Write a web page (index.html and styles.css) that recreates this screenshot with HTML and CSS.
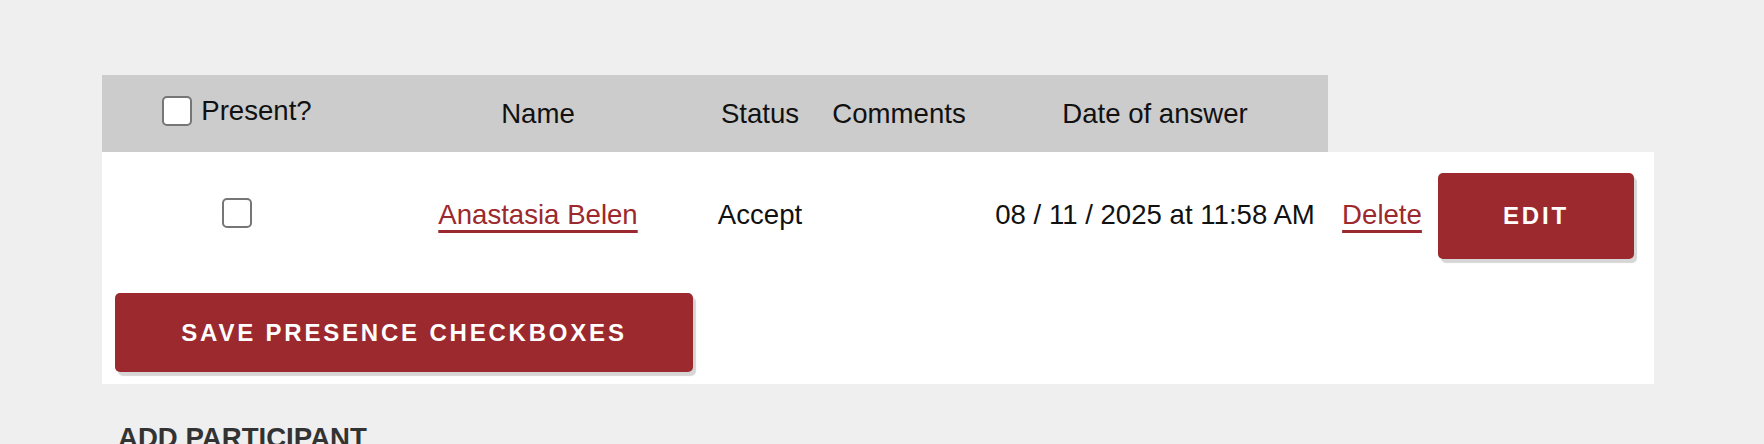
FILE: index.html
```html
<!DOCTYPE html>
<html lang="en">

<head>
    <meta charset="UTF-8" />
    <title>Participants</title>
    <link rel="stylesheet" href="styles.css">
</head>

<body>
    <div class="page">
        <form class="participants">
            <table class="participants-table">
                <colgroup>
                    <col class="col-present">
                    <col class="col-name">
                    <col class="col-status">
                    <col class="col-comments">
                    <col class="col-date">
                    <col class="col-delete">
                    <col class="col-edit">
                </colgroup>
                <thead>
                    <tr>
                        <th>
                            <label class="check-all">
                                <input type="checkbox" class="check" />
                                <span>Present?</span>
                            </label>
                        </th>
                        <th>Name</th>
                        <th>Status</th>
                        <th>Comments</th>
                        <th>Date of answer</th>
                    </tr>
                </thead>
                <tbody>
                    <tr>
                        <td><input type="checkbox" class="check" /></td>
                        <td><a href="#" class="link">Anastasia Belen</a></td>
                        <td>Accept</td>
                        <td></td>
                        <td>08 / 11 / 2025 at 11:58 AM</td>
                        <td><a href="#" class="link">Delete</a></td>
                        <td class="edit-cell"><button type="button" class="btn btn-edit">Edit</button></td>
                    </tr>
                </tbody>
            </table>
            <div class="save-bar">
                <button type="button" class="btn btn-save">Save presence checkboxes</button>
            </div>
        </form>

        <h3 class="section-title">Add participant</h3>
    </div>
</body>

</html>
```

FILE: styles.css
```css
body {
    margin: 0;
    font-family: "Liberation Sans", Arial, sans-serif;
    background-color: #efefef;
    color: #111;
}

.page {
    padding: 75px 0 0 102px;
    width: 1552px;
}

.participants-table {
    width: 1552px;
    table-layout: fixed;
    border-collapse: collapse;
    font-size: 27.6px;
}

.col-present { width: 270px; }
.col-name { width: 332px; }
.col-status { width: 112px; }
.col-comments { width: 166px; }
.col-date { width: 346px; }
.col-delete { width: 108px; }
.col-edit { width: 218px; }

.participants-table th {
    background-color: #cccccc;
    font-weight: normal;
    height: 77px;
    padding: 0;
    text-align: center;
    vertical-align: middle;
    white-space: nowrap;
}

.participants-table td {
    background-color: #fff;
    padding: 21px 0;
    text-align: center;
    vertical-align: baseline;
    white-space: nowrap;
}

.participants-table td.edit-cell {
    text-align: left;
    padding: 21px 20px 21px 2px;
}

.check-all {
    display: inline-flex;
    align-items: center;
    gap: 9px;
}

.check {
    appearance: none;
    -webkit-appearance: none;
    box-sizing: border-box;
    width: 30px;
    height: 30px;
    margin: 0;
    border: 2px solid #767676;
    border-radius: 5px;
    background: #fff;
    vertical-align: -4px;
}

.link {
    color: #9b292d;
    text-decoration: underline;
    text-decoration-thickness: 3px;
    text-underline-offset: 6px;
}

.btn {
    border: none;
    border-radius: 5px;
    background-color: #9b292d;
    color: #fff;
    font-family: "Liberation Sans", Arial, sans-serif;
    font-size: 24px;
    font-weight: bold;
    letter-spacing: 2.8px;
    text-transform: uppercase;
    box-shadow: 3px 4px 1px #d6d6d6;
    cursor: pointer;
    padding: 0;
}

.btn-edit {
    width: 196px;
    height: 86px;
}

.btn-save {
    width: 578px;
    height: 79px;
}

.save-bar {
    background-color: #fff;
    padding: 13px 0 12px 13px;
}

.section-title {
    margin: 38px 0 0 16px;
    font-size: 27.6px;
    color: #333;
    text-transform: uppercase;
}
```
